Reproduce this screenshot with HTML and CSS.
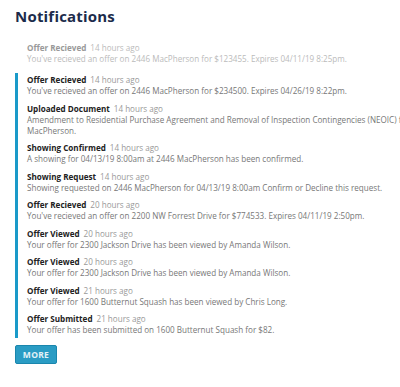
FILE: index.html
```html
<!DOCTYPE html>
<html>
<head>
<meta charset="utf-8">
<link rel="stylesheet" href="styles.css">
</head>
<body>
<div class="page">
  <h1 class="title">Notifications</h1>
  <div class="item faded">
    <div class="head"><span class="name">Offer Recieved</span><span class="time">14 hours ago</span></div>
    <div class="body">You've recieved an offer on 2446 MacPherson for $123455. Expires 04/11/19 8:25pm.</div>
  </div>
  <div class="list">
    <div class="item">
      <div class="head"><span class="name">Offer Recieved</span><span class="time">14 hours ago</span></div>
      <div class="body">You've recieved an offer on 2446 MacPherson for $234500. Expires 04/26/19 8:22pm.</div>
    </div>
    <div class="item">
      <div class="head"><span class="name">Uploaded Document</span><span class="time">14 hours ago</span></div>
      <div class="body">Amendment to Residential Purchase Agreement and Removal of Inspection Contingencies (NEOIC) for 2446 MacPherson.</div>
    </div>
    <div class="item">
      <div class="head"><span class="name">Showing Confirmed</span><span class="time">14 hours ago</span></div>
      <div class="body">A showing for 04/13/19 8:00am at 2446 MacPherson has been confirmed.</div>
    </div>
    <div class="item">
      <div class="head"><span class="name">Showing Request</span><span class="time">14 hours ago</span></div>
      <div class="body">Showing requested on 2446 MacPherson for 04/13/19 8:00am Confirm or Decline this request.</div>
    </div>
    <div class="item">
      <div class="head"><span class="name">Offer Recieved</span><span class="time">20 hours ago</span></div>
      <div class="body">You've recieved an offer on 2200 NW Forrest Drive for $774533. Expires 04/11/19 2:50pm.</div>
    </div>
    <div class="item">
      <div class="head"><span class="name">Offer Viewed</span><span class="time">20 hours ago</span></div>
      <div class="body">Your offer for 2300 Jackson Drive has been viewed by Amanda Wilson.</div>
    </div>
    <div class="item">
      <div class="head"><span class="name">Offer Viewed</span><span class="time">20 hours ago</span></div>
      <div class="body">Your offer for 2300 Jackson Drive has been viewed by Amanda Wilson.</div>
    </div>
    <div class="item">
      <div class="head"><span class="name">Offer Viewed</span><span class="time">21 hours ago</span></div>
      <div class="body">Your offer for 1600 Butternut Squash has been viewed by Chris Long.</div>
    </div>
    <div class="item">
      <div class="head"><span class="name">Offer Submitted</span><span class="time">21 hours ago</span></div>
      <div class="body">Your offer has been submitted on 1600 Butternut Squash for $82.</div>
    </div>
  </div>
  <button class="more">MORE</button>
</div>
</body>
</html>
```
FILE: styles.css
```css
html, body {
  margin: 0;
  padding: 0;
  background: #fff;
  overflow: hidden;
}
body {
  font-family: "Open Sans", "Liberation Sans", sans-serif;
}
.page {
  padding: 5px 0 0 15px;
  width: 430px;
}
.title {
  margin: 0 0 15px 0;
  font-size: 15px;
  line-height: 22px;
  font-weight: 700;
  color: #1c2b4b;
  letter-spacing: 0.2px;
}
.item {
  padding-left: 12px;
  margin-bottom: 6.5px;
  font-size: 8.1px;
  line-height: 11px;
}
.faded {
  margin-bottom: 9px;
}
.list {
  border-left: 3px solid #1a9ac9;
  padding-top: 1px;
  margin-bottom: 7px;
}
.list .item {
  padding-left: 9px;
}
.list .item:last-child {
  margin-bottom: 0;
  padding-bottom: 3px;
}
.head {
  color: #222;
}
.name {
  font-weight: 700;
  margin-right: 4px;
}
.time {
  color: #999;
}
.body {
  color: #777;
}
.faded .head {
  color: #999;
}
.faded .time {
  color: #bbb;
}
.faded .body {
  color: #bbb;
}
.more {
  display: block;
  width: 42px;
  height: 19px;
  padding: 0;
  border: 1px solid #1a86ad;
  border-radius: 2px;
  background: #2a9cc4;
  color: #e3f2f7;
  font-family: "Open Sans", "Liberation Sans", sans-serif;
  font-size: 8.5px;
  letter-spacing: 0.3px;
  font-weight: 700;
}
```
